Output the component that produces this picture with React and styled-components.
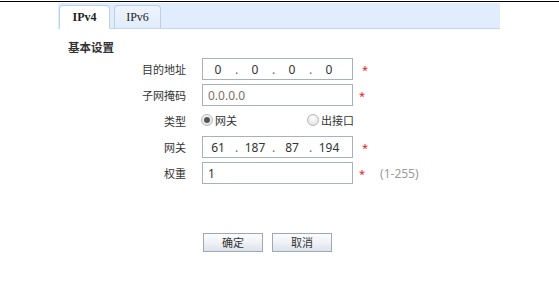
import React from "react";
import styled, { createGlobalStyle } from "styled-components";

const Global = createGlobalStyle`
  html, body { margin: 0; padding: 0; background: #fff; }
  body {
    font-family: "Noto Sans CJK SC", "Noto Sans", sans-serif;
    color: #333;
    font-size: 11px;
  }
  * { box-sizing: border-box; }
`;

const Page = styled.div`
  width: 559px;
  height: 291px;
  padding-top: 1px;
`;

const TopLine = styled.div`
  height: 1px;
  background: #000;
`;

const TabBar = styled.div`
  margin: 1px 0 0 58px;
  width: 442px;
  height: 26px;
  background: #e1edfc;
  border-bottom: 1px solid #c3d8f0;
  display: flex;
  align-items: flex-end;
  padding-left: 1px;
  gap: 4px;
`;

const Tab = styled.div`
  width: ${(p) => p.$w}px;
  height: 24px;
  margin-bottom: -1px;
  border: 1px solid #b9cfea;
  border-bottom: ${(p) => (p.$active ? "1px solid #fff" : "1px solid #c3d8f0")};
  border-radius: 4px 4px 0 0;
  background: ${(p) => (p.$active ? "#fff" : "linear-gradient(#eef4fd, #e1ecfb)")};
  display: flex;
  align-items: center;
  justify-content: center;
  font-family: "Liberation Serif", serif;
  font-size: 12px;
  font-weight: ${(p) => (p.$active ? 700 : 400)};
  color: #222;
  padding-top: 1px;
`;

const Title = styled.div`
  margin: 10px 0 0 68px;
  font-size: 11.5px;
  font-weight: 700;
  line-height: 16px;
  color: #333;
`;

const Form = styled.div`
  margin: 3px 0 0 130px;
  display: grid;
  grid-template-columns: 56px auto;
  column-gap: 16px;
  row-gap: 4px;
  align-items: center;
`;

const Label = styled.div`
  text-align: right;
  font-size: 11px;
  line-height: 22px;
  color: #333;
`;

const Field = styled.div`
  display: flex;
  align-items: center;
  height: 22px;
`;

const Box = styled.div`
  width: 151px;
  height: 22px;
  border: 1px solid #a8b1bc;
  display: flex;
  align-items: center;
  background: #fff;
`;

const Seg = styled.input`
  width: 30px;
  height: 18px;
  border: none;
  outline: none;
  padding: 0;
  text-align: center;
  font-family: "Noto Sans", sans-serif;
  font-size: 12px;
  color: #333;
  background: transparent;
`;

const Dot = styled.span`
  width: 7px;
  text-align: center;
  font-family: "Noto Sans", sans-serif;
  font-size: 12px;
  color: #666;
  line-height: 18px;
  padding-top: 2px;
`;

const Plain = styled.input`
  width: 151px;
  height: 22px;
  border: 1px solid #a8b1bc;
  outline: none;
  padding: 0 0 0 5px;
  font-family: "Noto Sans", sans-serif;
  font-size: 12px;
  color: ${(p) => (p.$muted ? "#7a7066" : "#333")};
  background: #fff;
`;

const Star = styled.span`
  color: #e51c1c;
  margin-left: ${(p) => p.$ml ?? 9}px;
  font-family: "Noto Sans", sans-serif;
  font-size: 11px;
`;

const Hint = styled.span`
  margin-left: 15px;
  color: #9a9a9a;
  font-family: "Noto Sans", sans-serif;
  font-size: 12px;
`;

const RadioOpt = styled.label`
  display: flex;
  align-items: center;
  width: ${(p) => p.$w || "auto"};
  font-size: 11px;
  color: #333;
  margin-top: -3px;
`;

const Circle = styled.span`
  width: 12px;
  height: 12px;
  border-radius: 50%;
  border: 1px solid #b8b8b8;
  background: radial-gradient(circle at 50% 35%, #ffffff, #dcdcdc);
  display: inline-flex;
  align-items: center;
  justify-content: center;
  margin-right: 2px;
  margin-left: -1px;
  &::after {
    content: "";
    width: 6px;
    height: 6px;
    border-radius: 50%;
    background: ${(p) => (p.$checked ? "#555" : "transparent")};
  }
`;

const Buttons = styled.div`
  margin: 49px 0 0 203px;
  display: flex;
  gap: 9px;
`;

const Btn = styled.button`
  width: 60px;
  height: 19px;
  border: 1px solid #9ea8b6;
  background: linear-gradient(#fbfcfd, #f1f3f7 45%, #dde3eb);
  font-family: "Noto Sans CJK SC", sans-serif;
  font-size: 11px;
  color: #333;
  padding: 0;
  line-height: 17px;
`;

function IpBox({ parts }) {
  return (
    <Box>
      {parts.map((v, i) => (
        <React.Fragment key={i}>
          <Seg defaultValue={v} readOnly />
          {i < 3 && <Dot>.</Dot>}
        </React.Fragment>
      ))}
    </Box>
  );
}

export default function App() {
  return (
    <Page>
      <Global />
      <TopLine />
      <TabBar>
        <Tab $active $w={51}>IPv4</Tab>
        <Tab $w={47}>IPv6</Tab>
      </TabBar>
      <Title>基本设置</Title>
      <Form>
        <Label>目的地址</Label>
        <Field>
          <IpBox parts={["0", "0", "0", "0"]} />
          <Star>*</Star>
        </Field>
        <Label>子网掩码</Label>
        <Field>
          <Plain defaultValue="0.0.0.0" $muted readOnly />
          <Star $ml={6}>*</Star>
        </Field>
        <Label>类型</Label>
        <Field>
          <RadioOpt $w="106px">
            <Circle $checked />
            网关
          </RadioOpt>
          <RadioOpt>
            <Circle />
            出接口
          </RadioOpt>
        </Field>
        <Label>网关</Label>
        <Field>
          <IpBox parts={["61", "187", "87", "194"]} />
          <Star>*</Star>
        </Field>
        <Label>权重</Label>
        <Field>
          <Plain defaultValue="1" readOnly />
          <Star $ml={6}>*</Star>
          <Hint>(1-255)</Hint>
        </Field>
      </Form>
      <Buttons>
        <Btn>确定</Btn>
        <Btn>取消</Btn>
      </Buttons>
    </Page>
  );
}
